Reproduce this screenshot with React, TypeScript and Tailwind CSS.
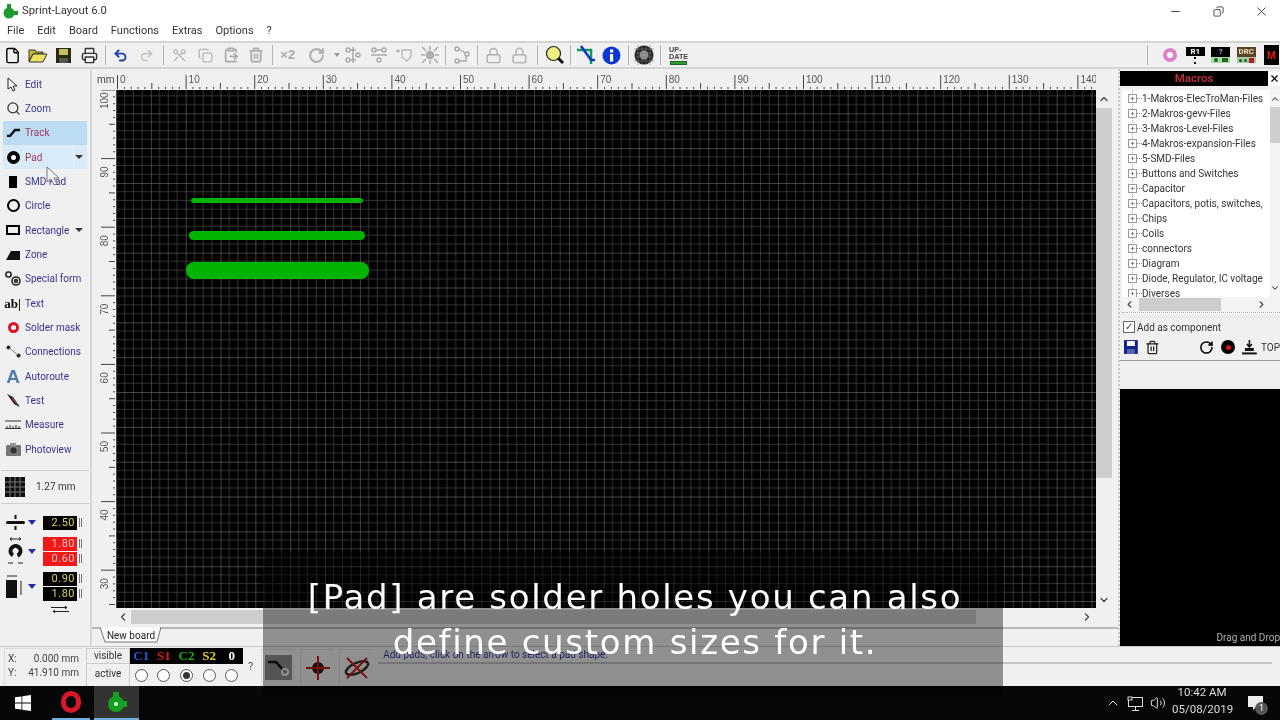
import { ChevronDown, ChevronLeft, ChevronRight, ChevronUp, Copy, File, Printer, Redo2, RotateCw, Scissors, Trash2, Undo2, X, Minus, Volume2, ClipboardPaste, Lock, Search } from "lucide-react";
import type { ReactNode } from "react";

const ui = "font-['Roboto',sans-serif]";

// numbers in this list are separators (their slot width)
const toolbar: (ReactNode | number)[] = [
  <File size={17} strokeWidth={2} className="text-black" />,
  <svg width="20" height="16" viewBox="0 0 20 16"><path d="M1 3h6l1 2h7v2H5L1 14z" fill="#c8b830" stroke="#333" /><path d="M5 7h14l-4 8H1z" fill="#ece060" stroke="#333" /></svg>,
  <svg width="15" height="15" viewBox="0 0 15 15"><rect width="15" height="15" fill="#2a2a10" /><rect x="3" y="1" width="9" height="6" fill="#c8c060" /><rect x="3" y="10" width="9" height="5" fill="#555" /></svg>,
  <Printer size={17} strokeWidth={2} className="text-[#333]" />,
  6,
  <Undo2 size={15} strokeWidth={3} className="text-[#1c3fa8]" />,
  <Redo2 size={15} strokeWidth={2.5} className="text-[#c4c4c4]" />,
  8,
  <Scissors size={15} className="text-[#b5b5b5] rotate-90" />,
  <Copy size={15} className="text-[#b5b5b5]" />,
  <ClipboardPaste size={16} strokeWidth={2.5} className="text-[#a8a8a8]" />,
  <Trash2 size={16} strokeWidth={2.5} className="text-[#aaaaaa]" />,
  6,
  <span className="font-['Liberation_Sans',sans-serif] text-[13px] font-bold text-[#a8a8a8]">×2</span>,
  <span className="w-[40px] shrink-0 flex items-center gap-[9px] pl-[7px]"><RotateCw size={17} strokeWidth={3} className="text-[#b0b0b0]" /><span className="border-x-[3px] border-t-[4px] border-x-transparent border-t-[#999]" /></span>,
  <svg width="18" height="18" viewBox="0 0 18 18" fill="none" stroke="#aaa" strokeWidth="1.5"><circle cx="4" cy="4" r="2" /><circle cx="4" cy="14" r="2" /><circle cx="14" cy="9" r="2" /><path d="M9 1v16M6 4h6M6 14h6" /></svg>,
  <svg width="18" height="18" viewBox="0 0 18 18" fill="none" stroke="#aaa" strokeWidth="1.5"><circle cx="4" cy="4" r="2" /><circle cx="14" cy="4" r="2" /><circle cx="9" cy="14" r="2" /><path d="M1 9h16M6 4h6" /></svg>,
  <svg width="18" height="18" viewBox="0 0 18 18" fill="none" stroke="#b8b8b8" strokeWidth="1.3"><path d="M1 5h4M3 3v4M7 4h9v7l-4 4-5-4z" /></svg>,
  <svg width="20" height="20" viewBox="0 0 20 20" fill="none" stroke="#aaa" strokeWidth="1.5"><circle cx="10" cy="10" r="3.5" fill="#b0b0b0" /><path d="M2 2l4 4M18 2l-4 4M2 18l4-4M18 18l-4-4M10 1v4M10 15v4M1 10h4M15 10h4" /></svg>,
  6,
  <svg width="17" height="18" viewBox="0 0 17 18" fill="none" stroke="#aaa" strokeWidth="1.5"><circle cx="4" cy="3" r="2" /><circle cx="4" cy="15" r="2" /><circle cx="14" cy="8" r="2" /><path d="M6 3l6 4M13 10v5H6" /></svg>,
  7,
  <Lock size={17} className="text-[#b0b0b0]" />,
  <Lock size={17} strokeWidth={2.5} className="text-[#bcbcbc]" />,
  10,
  <svg width="20" height="20" viewBox="0 0 20 20"><circle cx="8.5" cy="8.5" r="7" fill="#f0f080" stroke="#222" strokeWidth="1.2" /><path d="M13 13l5 5" stroke="#111" strokeWidth="3" /></svg>,
  6,
  <svg width="20" height="20" viewBox="0 0 20 20" fill="none"><path d="M1 5h14v14" stroke="#0e9a5a" strokeWidth="2.5" /><path d="M5 1l10 14h4" stroke="#1238c0" strokeWidth="2.5" /></svg>,
  <svg width="19" height="19" viewBox="0 0 19 19"><circle cx="9.5" cy="9.5" r="9" fill="#0a35d8" /><rect x="8" y="8" width="3.2" height="7.5" fill="#fff" /><rect x="8" y="3.5" width="3.2" height="3" fill="#fff" /></svg>,
  7,
  <svg width="20" height="20" viewBox="0 0 20 20"><circle cx="10" cy="10" r="9.5" fill="#222" /><circle cx="10" cy="10" r="4.5" fill="#999" /><path d="M0 4h20M0 8h20M0 12h20M0 16h20M4 0v20M8 0v20M12 0v20M16 0v20" stroke="#777" strokeWidth=".6" /></svg>,
  7,
  <span className="flex flex-col items-center font-['Liberation_Sans',sans-serif] text-[8px] leading-[7px] font-bold text-[#444] scale-x-90 ml-[3px]">UP-<br />DATE<span className="mt-[1px] w-[19px] h-[4px] bg-[#2e9a3a] border border-[#226622]" /></span>,
];

const tools = [
  { label: "Edit", icon: <svg width="12" height="15" viewBox="0 0 12 15"><path d="M1 1v11l3-2 2 4 2-1-2-4h4z" fill="#fff" stroke="#222" /></svg> },
  { label: "Zoom", icon: <Search size={15} strokeWidth={2} className="text-[#333]" /> },
  { label: "Track", active: true, icon: <svg width="15" height="9" viewBox="0 0 15 9" fill="none"><path d="M1 8h3l5-6h5" stroke="#111" strokeWidth="2.4" /></svg> },
  { label: "Pad", hover: true, menu: true, icon: <span className="w-[13px] h-[13px] rounded-full border-[4px] border-black bg-white" /> },
  { label: "SMD Pad", icon: <span className="w-[8px] h-[12px] bg-black" /> },
  { label: "Circle", icon: <span className="w-[13px] h-[13px] rounded-full border-2 border-black" /> },
  { label: "Rectangle", menu: true, icon: <span className="w-[14px] h-[10px] border-2 border-black" /> },
  { label: "Zone", icon: <svg width="14" height="10" viewBox="0 0 14 10"><path d="M0 10L5 1h9v9z" fill="#111" /></svg> },
  { label: "Special form", icon: <svg width="16" height="15" viewBox="0 0 16 15" fill="none" stroke="#222" strokeWidth="1.6"><rect x="1" y="1" width="5" height="5" rx="2" /><circle cx="11" cy="10" r="4" /><circle cx="11" cy="10" r="1.4" /></svg> },
  { label: "Text", icon: <span className="font-['Liberation_Serif',serif] font-bold text-[13px] leading-none text-black whitespace-nowrap -ml-[1px]">ab|</span> },
  { label: "Solder mask", icon: <span className="w-[11px] h-[11px] rounded-full border-[3px] border-[#e01020] bg-white" /> },
  { label: "Connections", icon: <svg width="15" height="13" viewBox="0 0 15 13"><circle cx="2.5" cy="2.5" r="2" fill="#222" /><circle cx="12.5" cy="10.5" r="2" fill="#222" /><path d="M3 3l9 7" stroke="#888" /></svg> },
  { label: "Autoroute", icon: <span className="font-['Liberation_Sans',sans-serif] font-bold text-[19px] leading-none text-[#4f7fa8]">A</span> },
  { label: "Test", icon: <svg width="15" height="15" viewBox="0 0 15 15"><path d="M1 1l6 3 7 10-6-3z" fill="#222" /><path d="M6 5l5 6" stroke="#d04040" /></svg> },
  { label: "Measure", icon: <svg width="16" height="9" viewBox="0 0 16 9" fill="none" stroke="#333"><path d="M0 1h16M0 8.5h16M2 8V6M5 8V5M8 8V6M11 8V5M14 8V6" /></svg> },
  { label: "Photoview", icon: <svg width="15" height="13" viewBox="0 0 15 13"><rect y="2" width="15" height="11" rx="1" fill="#777" /><rect x="4" width="6" height="3" fill="#999" /><circle cx="7.5" cy="7.5" r="3" fill="#333" /></svg> },
];

const macros = ["1-Makros-ElecTroMan-Files", "2-Makros-gevv-Files", "3-Makros-Level-Files", "4-Makros-expansion-Files", "5-SMD-Files", "Buttons and Switches", "Capacitor", "Capacitors, potis, switches,", "Chips", "Coils", "connectors", "Diagram", "Diode, Regulator, IC voltage", "Diverses"];

const layers = [
  { t: "C1", c: "text-[#2a55e0]" },
  { t: "S1", c: "text-[#e01818]" },
  { t: "C2", c: "text-[#12b012]" },
  { t: "S2", c: "text-[#e0d020]" },
  { t: "0", c: "text-white" },
];

const mm = 6.86;
const hTicks = Array.from({ length: 143 }, (_, i) => i);
const vTicks = Array.from({ length: 76 }, (_, i) => i);

function TopRuler() {
  return (
    <svg width="980" height="20" className="block">
      {hTicks.map((i) => {
        const x = 1.5 + i * mm;
        const h = i % 10 === 0 ? 14 : i % 5 === 0 ? 6 : 2;
        return <line key={i} x1={x} x2={x} y1={19} y2={19 - h} stroke="#444" strokeWidth="1" />;
      })}
      {hTicks.filter((i) => i % 10 === 0).map((i) => (
        <text key={i} x={4 + i * mm} y={13} fontSize="10" fill="#555" fontFamily="Liberation Sans, sans-serif">{i}</text>
      ))}
    </svg>
  );
}

function SideRuler() {
  return (
    <svg width="19" height="518" className="block">
      {vTicks.map((i) => {
        const y = i * mm;
        const w = i % 10 === 0 ? 14 : i % 5 === 0 ? 6 : 2;
        return <line key={i} x1={18} x2={18 - w} y1={y} y2={y} stroke="#444" strokeWidth="1" />;
      })}
      {vTicks.filter((i) => i % 10 === 0).map((i) => (
        <text key={i} transform={`translate(10.5 ${i * mm + 19}) rotate(-90)`} fontSize="10" fill="#555" fontFamily="Liberation Sans, sans-serif">{100 - i}</text>
      ))}
    </svg>
  );
}

function Board() {
  return (
    <svg width="980" height="518" className="block bg-black">
      <defs>
        <pattern id="grid" x="0" y="23.3" width="34.84" height="34.84" patternUnits="userSpaceOnUse">
          <path d="M8.71 0V34.84M17.42 0V34.84M26.13 0V34.84M0 8.71H34.84M0 17.42H34.84M0 26.13H34.84" stroke="#343434" strokeWidth="1" />
          <path d="M0 0V34.84M0 0H34.84" stroke="#5c5c5c" strokeWidth="1.4" />
        </pattern>
      </defs>
      <rect width="980" height="518" fill="url(#grid)" />
      <rect x="75" y="108" width="172" height="5" rx="2.5" fill="#00b400" />
      <rect x="73" y="141" width="176" height="9" rx="4.5" fill="#00b400" />
      <rect x="70" y="172" width="183" height="17" rx="8" fill="#00b400" />
    </svg>
  );
}

function Value({ v, red }: { v: string; red?: boolean }) {
  return (
    <div className="flex items-center gap-[2px]">
      <div className={`w-[34px] h-[14px] text-right pr-[2px] text-[11px] tracking-[.5px] leading-[14px] ${red ? "bg-[#f01818] text-[#f8c8b8]" : "bg-black text-[#d8d050]"}`}>{v}</div>
      <div className="w-[3px] h-[9px] border-x border-[#777]" />
    </div>
  );
}

function BlueArrow() {
  return <span className="border-x-[4px] border-t-[5px] border-x-transparent border-t-[#1c2cb0]" />;
}

export default function App() {
  return (
    <div className={`relative w-[1280px] h-[720px] overflow-hidden bg-[#f0f0f0] flex flex-col text-[#222] blur-[0.35px] ${ui}`}>
      {/* title bar */}
      <div className="h-[22px] bg-white flex items-center shrink-0">
        <svg width="16" height="16" viewBox="0 0 16 16" className="ml-[3px]"><circle cx="6" cy="10" r="5.5" fill="#1f9a2c" /><rect x="4" y="1" width="4" height="6" fill="#1f9a2c" /><rect x="9" y="8" width="6" height="4" fill="#1f9a2c" /></svg>
        <span className="ml-[3px] text-[11.3px] text-[#333]">Sprint-Layout 6.0</span>
        <div className="ml-auto flex items-center text-[#444]">
          <Minus size={13} className="mr-[31px]" />
          <Copy size={11} className="mr-[30px] -scale-x-100" />
          <X size={15} strokeWidth={1.5} className="mr-[11px]" />
        </div>
      </div>

      {/* menu */}
      <div className="h-[19px] bg-white flex items-center pl-[7px] gap-[13px] text-[11px] text-[#333] shrink-0">
        {["File", "Edit", "Board", "Functions", "Extras", "Options", "?"].map((m) => <span key={m}>{m}</span>)}
      </div>

      {/* toolbar */}
      <div className="h-[28px] border-y-2 border-[#d4d4d4] flex items-center shrink-0">
        {toolbar.map((t, i) =>
          typeof t === "number" ? (
            <div key={i} style={{ width: t }} className="h-[20px] flex justify-center shrink-0"><div className="w-[1px] h-full bg-[#b4b4b4]" /></div>
          ) : (
            <div key={i} className="min-w-[25.5px] h-[22px] flex items-center justify-center shrink-0">{t}</div>
          )
        )}
        <div className="ml-auto flex items-center">
          <div className="w-[1px] h-[20px] bg-[#b4b4b4] mr-[9px]" />
          <div className="w-[25.5px] flex justify-center"><span className="w-[14px] h-[14px] rounded-full border-[4px] border-[#e080c8] bg-white" /></div>
          <div className="w-[25.5px] flex flex-col items-center"><span className="w-[19px] h-[9px] bg-black text-white text-[8px] leading-[9px] text-center font-bold">R1</span><span className="w-[2px] h-[7px] mt-[1px] border-y-2 border-black" /></div>
          <div className="w-[25.5px] flex flex-col items-center">
            <span className="w-[19px] h-[10px] bg-black text-[#88b8e8] text-[8px] leading-[10px] text-center font-bold">?</span>
            <span className="w-[19px] h-[6px] bg-[#a8d8a0] flex items-center justify-center gap-[4px]"><span className="w-[4px] h-[4px] rounded-full bg-[#14642a]" /><span className="w-[6px] h-[4px] bg-[#14642a]" /></span>
          </div>
          <div className="w-[25.5px] flex flex-col items-center">
            <span className="w-[19px] h-[10px] bg-[#55452a] text-[#f0e0b0] text-[8px] leading-[10px] text-center font-bold">DRC</span>
            <span className="w-[19px] h-[6px] bg-[#a8c8a0] flex items-center justify-center gap-[2px]"><span className="w-[3px] h-[3px] rounded-full bg-[#14642a]" /><span className="w-[3px] h-[3px] rounded-full bg-[#14642a]" /><span className="w-[5px] h-[5px] bg-[#b02020]" /></span>
          </div>
          <div className="w-[15px] h-[20px] bg-black flex items-center justify-center text-[#e01818] text-[10px] font-bold ml-[5px] mr-[1px]">M</div>
        </div>
      </div>

      {/* main */}
      <div className="flex-1 flex min-h-0">
        {/* left tools */}
        <div className="w-[92px] shrink-0 border-r-2 border-[#d8d8d8] pt-[3px] flex flex-col text-[10px]">
          {tools.map((t) => (
            <div
              key={t.label}
              className={`h-[24.35px] shrink-0 mx-[3px] flex items-center relative ${t.active ? "bg-[#bcdcf4]" : t.hover ? "bg-[#d9ebf8]" : ""}`}
            >
              <span className="w-[22px] pr-[2px] flex justify-center">{t.icon}</span>
              <span className={t.active || t.hover ? "text-[#a03860]" : "text-[#35358f]"}>{t.label}</span>
              {t.hover && <span className="absolute left-[70px] top-0 h-full w-[1px] bg-[#e8f2fa]" />}
              {t.menu && <span className="absolute right-[4px] border-x-[4px] border-t-[4px] border-x-transparent border-t-[#333]" />}
            </div>
          ))}

          <div className="mt-[8px] mx-[1px] h-[34px] border-y border-[#d0d0d0] flex items-center">
            <svg width="20" height="20" viewBox="0 0 20 20" className="ml-[4px]"><rect width="20" height="20" fill="#111" /><path d="M5 0v20M10 0v20M15 0v20M0 5h20M0 10h20M0 15h20" stroke="#777" /></svg>
            <span className="ml-[11px] text-[10px] text-[#333]">1.27 mm</span>
          </div>

          <div className="mt-[12px] flex items-center pl-[6px] h-[14px]">
            <svg width="19" height="15" viewBox="0 0 19 15"><rect y="6" width="19" height="3" rx="1.5" fill="#111" /><path d="M9.5 0v4M9.5 11v4" stroke="#111" strokeWidth="2" /></svg>
            <span className="ml-[3px] mr-[7px] flex"><BlueArrow /></span>
            <Value v="2.50" />
          </div>
          <div className="mt-[7px] flex items-center pl-[6px] h-[29px]">
            <svg width="19" height="28" viewBox="0 0 19 28" fill="none"><path d="M4 2h11M4 2l2-1.500M4 2l2 1.500M15 2l-2-1.500M15 2l-2 1.500M2 26h5M12 26h5" stroke="#222" /><circle cx="9.5" cy="14" r="5" stroke="#111" strokeWidth="4" strokeDasharray="26 6" transform="rotate(121 9.5 14)" /></svg>
            <span className="ml-[3px] mr-[7px] flex"><BlueArrow /></span>
            <div className="flex flex-col gap-[1px]"><Value v="1.80" red /><Value v="0.60" red /></div>
          </div>
          <div className="mt-[6px] flex items-center pl-[6px] h-[29px]">
            <svg width="19" height="26" viewBox="0 0 19 26"><rect y="7" width="11" height="18" fill="#111" /><path d="M1 3h10M15 8v14" stroke="#222" /></svg>
            <span className="ml-[3px] mr-[7px] flex"><BlueArrow /></span>
            <div className="flex flex-col gap-[1px]"><Value v="0.90" /><Value v="1.80" /></div>
          </div>
          <svg width="18" height="7" viewBox="0 0 18 7" className="ml-[51px] mt-[5px]" fill="none" stroke="#222"><path d="M0 1.500h16M14 0l2 1.500-2 1.500M18 5.500H2M4 4L2 5.500 4 7" /></svg>
        </div>

        {/* board area */}
        <div className="w-[1028px] shrink-0 border-r-2 border-dotted border-[#c8c8c8] flex flex-col pt-[1px]">
          <div className="flex h-[20px] shrink-0 pl-[5px]">
            <span className="w-[19px] text-[10px] leading-[20px] text-[#444]">mm</span>
            <TopRuler />
          </div>
          <div className="flex h-[518px] shrink-0 pl-[5px] overflow-hidden">
            <SideRuler />
            <Board />
            <div className="w-[16px] bg-[#f0f0f0] flex flex-col items-center text-[#444]">
              <ChevronUp size={12} strokeWidth={2.5} className="my-[3px]" />
              <div className="w-full h-[370px] bg-[#cdcdcd]" />
              <ChevronDown size={12} strokeWidth={2.5} className="mt-auto mb-[2px]" />
            </div>
          </div>
          <div className="h-[16px] shrink-0 ml-[24px] w-[980px] mt-[1px] flex items-center text-[#444]">
            <ChevronLeft size={12} strokeWidth={2.5} className="ml-[1px]" />
            <div className="ml-[2px] w-[845px] h-[14px] bg-[#cdcdcd]" />
            <ChevronRight size={12} strokeWidth={2.5} className="ml-auto mr-[3px]" />
          </div>
          <div className="mt-[2px] flex-1 border-t-2 border-[#b8b8b8]">
            <div className="relative -mt-[2px] ml-[8px] w-[62px] h-[16px] text-[10px] leading-[17px] text-center text-[#222]">
              <svg width="62" height="16" viewBox="0 0 62 16" className="absolute inset-0" fill="#fbfbfb" stroke="#777"><path d="M0 0l5 15h52l4-15" /></svg>
              <span className="relative">New board</span>
            </div>
          </div>
        </div>

        {/* macros */}
        <div className="flex-1 min-w-0 flex flex-col pt-[2px]">
          <div className="h-[15px] flex shrink-0">
            <div className="w-[148px] bg-black text-center text-[11.5px] leading-[15px] font-semibold text-[#b83038]">Macros</div>
            <div className="flex-1 flex justify-center items-center bg-white"><X size={11} strokeWidth={2.5} className="text-black" /></div>
          </div>
          <div className="mt-[4px] ml-[2px] h-[223px] flex flex-col bg-white shrink-0 border-b border-dotted border-[#aaa]">
            <div className="flex-1 min-h-0 flex">
              <div className="relative w-[148px] overflow-hidden pl-[6px] pt-[1px]">
                <span className="absolute left-[10px] top-0 bottom-0 border-l border-dotted border-[#aaa]" />
                {macros.map((m) => (
                  <div key={m} className="relative h-[15px] flex items-center whitespace-nowrap text-[10px] text-[#333]">
                    <span className="w-[9px] h-[9px] bg-white border border-[#999] text-[8px] leading-[7px] text-center text-[#555] shrink-0">+</span>
                    <span className="w-[5px] border-t border-dotted border-[#888] shrink-0" />
                    {m}
                  </div>
                ))}
              </div>
              <div className="flex-1 flex flex-col items-center bg-[#f4f4f4] text-[#444]">
                <ChevronUp size={10} strokeWidth={2.5} className="mt-[4px]" />
                <div className="w-full h-[36px] mt-[3px] bg-[#cdcdcd]" />
                <ChevronDown size={10} strokeWidth={2.5} className="mt-auto mb-[4px]" />
              </div>
            </div>
            <div className="h-[15px] shrink-0 bg-[#f4f4f4] flex items-center text-[#444]">
              <ChevronLeft size={11} strokeWidth={2.5} className="ml-[2px]" />
              <div className="ml-[4px] w-[82px] h-[13px] bg-[#cdcdcd]" />
              <ChevronRight size={11} strokeWidth={2.5} className="ml-[35px]" />
            </div>
          </div>
          <div className="flex items-center h-[18px] mt-[5px] shrink-0 pl-[3px] text-[10px] text-[#333]">
            <span className="w-[12px] h-[12px] border border-[#666] bg-white text-[10px] leading-[10px] text-center mr-[2px]">✓</span>
            Add as component
          </div>
          <div className="flex items-center h-[20px] mt-[1px] shrink-0 overflow-hidden whitespace-nowrap">
            <svg width="14" height="14" viewBox="0 0 14 14" className="ml-[4px]"><rect width="14" height="14" fill="#10208c" /><rect x="3" y="1" width="8" height="5" fill="#fff" /><rect x="3" y="9" width="8" height="5" fill="#5566aa" /></svg>
            <Trash2 size={15} strokeWidth={2} className="ml-[7px] text-[#222]" />
            <RotateCw size={15} strokeWidth={2.5} className="ml-[39px] text-black" />
            <span className="ml-[8px] w-[14px] h-[14px] rounded-full bg-black flex items-center justify-center"><span className="w-[5px] h-[5px] rounded-full bg-[#e01020]" /></span>
            <svg width="15" height="15" viewBox="0 0 15 15" className="ml-[7px]"><path d="M7.500 0v6M5 4l2.500 3L10 4" stroke="#111" fill="none" strokeWidth="1.6" /><rect x="3" y="8" width="9" height="3" fill="#111" /><rect y="12.500" width="15" height="2" fill="#111" /></svg>
            <span className="ml-[4px] text-[10px] text-[#333]">TOP</span>
          </div>
          <div className="h-[29px] mt-[3px] shrink-0 border-t border-[#999]" />
          <div className="flex-1 bg-black flex items-end pb-[1px] overflow-hidden justify-end">
            <span className="text-[10px] text-[#b0b0b0] whitespace-nowrap">Drag and Drop</span>
          </div>
        </div>
      </div>

      {/* status */}
      <div className="h-[40px] shrink-0 flex border-t border-[#c8c8c8] pt-[1px] text-[10px] text-[#444]">
        <div className="w-[78px] ml-[4px] border-l border-t border-[#ddd] px-[3px] pt-[3px] leading-[14px]">
          <div className="flex justify-between"><span>X:</span><span>0.000 mm</span></div>
          <div className="flex justify-between"><span>Y:</span><span>41.910 mm</span></div>
        </div>
        <div className="w-[44px] ml-[4px] flex flex-col text-center text-[#333]">
          <div className="h-[16px] border border-[#ccc] leading-[14px]">visible</div>
          <div className="h-[22px] border-x border-[#ccc] leading-[20px]">active</div>
        </div>
        <div className="w-[113px] flex flex-col">
          <div className="h-[16px] bg-black grid grid-cols-5 font-['Liberation_Serif',serif] font-bold text-[13px] leading-[16px] text-center">
            {layers.map((l) => <span key={l.t} className={l.c}>{l.t}</span>)}
          </div>
          <div className="h-[22px] grid grid-cols-5 place-items-center">
            {layers.map((l, i) => (
              <span key={l.t} className="w-[13px] h-[13px] rounded-full border border-[#555] bg-white flex items-center justify-center">
                {i === 2 && <span className="w-[7px] h-[7px] rounded-full bg-[#333]" />}
              </span>
            ))}
          </div>
        </div>
        <span className="ml-[5px] mt-[11px] h-[14px] text-[11px] text-[#555]">?</span>
        <div className="ml-[8px] flex gap-[5px] pt-[1px]">
          <div className="w-[34px] h-[36px] border-l border-t border-[#dcdcdc] flex items-center justify-center">
            <div className="w-[27px] h-[25px] bg-[#8e8e8e] flex items-center justify-center">
              <svg width="24" height="18" viewBox="0 0 24 18" fill="none" stroke="#111" strokeWidth="2.6"><path d="M1 3h8l8 9" /><circle cx="18" cy="13" r="3" strokeWidth="2" stroke="#eee" /></svg>
            </div>
          </div>
          <div className="w-[34px] h-[36px] border-l border-t border-[#dcdcdc] flex items-center justify-center">
            <svg width="26" height="26" viewBox="0 0 26 26"><circle cx="13" cy="13" r="6" fill="#222" /><path d="M13 1v24M1 13h24" stroke="#c81818" strokeWidth="2" /></svg>
          </div>
          <div className="w-[34px] h-[36px] border-l border-t border-[#dcdcdc] flex items-center justify-center">
            <svg width="26" height="24" viewBox="0 0 26 24" fill="none"><ellipse cx="13" cy="12" rx="12" ry="5" stroke="#333" strokeWidth="2.500" transform="rotate(-25 13 12)" /><path d="M3 2l20 20M23 2L3 22" stroke="#c81818" strokeWidth="1.800" /></svg>
          </div>
        </div>
        <div className="ml-[5px] w-[894px] h-[16px] border-b-2 border-[#c4c4c4] pl-[5px] text-[#3838a0] text-[10px] leading-[14px]">
          Add pads, click on the arrow to select a pad shape.
        </div>
      </div>

      {/* taskbar */}
      <div className="h-[34px] shrink-0 bg-[#070707] flex items-center text-[#ddd]">
        <svg width="16" height="16" viewBox="0 0 16 16" fill="#fff" className="ml-[15px]"><path d="M0 2.300l6.500-.9v6.200H0zM7.300 1.300L16 0v7.600H7.300zM0 8.400h6.500v6.200L0 13.700zM7.300 8.400H16V16l-8.700-1.200z" /></svg>
        <div className="ml-[21px] w-[38px] h-full flex items-center justify-center border-b-2 border-[#6fb0e0]">
          <span className="w-[20px] h-[22px] rounded-full border-[5px] border-[#d8182a]" />
        </div>
        <div className="ml-[4px] w-[45px] h-full bg-[#333333] flex items-center justify-center border-b-2 border-[#6fb0e0]">
          <svg width="22" height="22" viewBox="0 0 22 22"><circle cx="10" cy="13" r="8" fill="#14a020" /><rect x="7" y="1" width="6" height="6" fill="#14a020" /><rect x="15" y="10" width="6" height="6" fill="#14a020" /><circle cx="10" cy="13" r="2" fill="#d8f8d8" /></svg>
        </div>
        <div className="ml-auto flex items-center">
          <ChevronUp size={16} strokeWidth={1.5} />
          <svg width="17" height="15" viewBox="0 0 17 15" fill="none" stroke="#ddd" className="ml-[6px]"><rect x="1.500" y="1.500" width="14" height="9" /><rect x="1" y="1" width="4" height="3" fill="#070707" /><path d="M8.500 11v3M5 14.500h7" /></svg>
          <Volume2 size={16} strokeWidth={1.5} className="ml-[6px]" />
          <div className="ml-[6px] -mt-[4px] w-[60px] text-center text-[11.5px] leading-[17px]">
            <div>10:42 AM</div>
            <div>05/08/2019</div>
          </div>
          <div className="relative ml-[16px] mr-[17px]">
            <svg width="15" height="15" viewBox="0 0 15 15"><path d="M0 0h15v11H8l-3 3v-3H0z" fill="#eee" /></svg>
            <span className="absolute -right-[5px] -bottom-[4px] w-[13px] h-[13px] rounded-full bg-[#555] text-[9px] leading-[13px] text-center text-white">1</span>
          </div>
        </div>
      </div>

      {/* mouse pointer */}
      <svg width="14" height="20" viewBox="0 0 14 20" className="absolute left-[46px] top-[166px]"><path d="M1 1v15l4-3 3 6 3-1-3-6h5z" fill="#f4f4f4" stroke="#777" /></svg>

      {/* video caption over the app */}
      <div className="absolute left-[263px] top-[552px] w-[740px] h-[146px] pl-[4px] bg-black/40 text-center font-['DejaVu_Sans',sans-serif] text-[34px] leading-[45px] text-white pt-[23px] tracking-[1.7px]">
        [Pad] are solder holes you can also<br />define custom sizes for it.
      </div>
    </div>
  );
}
